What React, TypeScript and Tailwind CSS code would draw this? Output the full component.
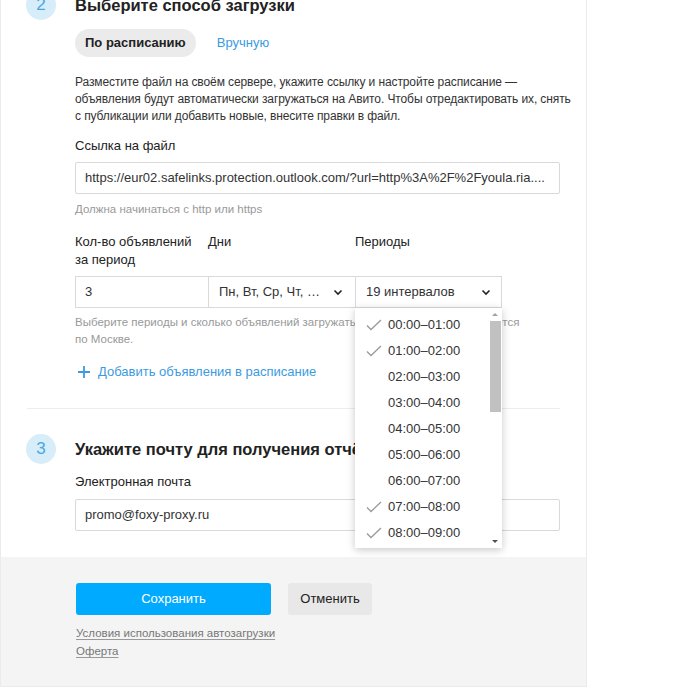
import React from "react";

const Check = () => (
  <svg width="16" height="12" viewBox="0 0 16 12" className="shrink-0">
    <path d="M1 6.5 L5 10.5 L15 1" fill="none" stroke="#9a9a9a" strokeWidth="1.3" />
  </svg>
);

const Chevron = () => (
  <svg width="10" height="7" viewBox="0 0 10 7">
    <path d="M1.5 1.5 L5 5 L8.5 1.5" fill="none" stroke="#222" strokeWidth="1.6" />
  </svg>
);

const periods: [string, boolean][] = [
  ["00:00–01:00", true],
  ["01:00–02:00", true],
  ["02:00–03:00", false],
  ["03:00–04:00", false],
  ["04:00–05:00", false],
  ["05:00–06:00", false],
  ["06:00–07:00", false],
  ["07:00–08:00", true],
  ["08:00–09:00", true],
];

export default function App() {
  return (
    <div
      className="w-[700px] h-[693px] bg-white overflow-hidden text-[#222]"
      style={{ fontFamily: '"Liberation Sans", Arial, sans-serif' }}
    >
      <div className="w-[587px] border-x border-b border-[#ebebeb] mt-[-10px]">
        {/* Section 2 */}
        <div className="pl-[25px] pr-[26px]">
          <div className="flex items-center gap-[19px] h-[30px]">
            <div className="w-[30px] h-[30px] rounded-full bg-[#d8edfa] text-[#4aa6e0] text-[17px] flex items-center justify-center">
              2
            </div>
            <div className="text-[16.5px] font-bold">Выберите способ загрузки</div>
          </div>
          <div className="pl-[49px]">
            <div className="flex items-center mt-[9px] h-[28px]">
              <div className="h-[28px] px-[10px] rounded-full bg-[#ebebeb] text-[13px] font-bold flex items-center">
                По расписанию
              </div>
              <div className="ml-[21px] text-[13px] text-[#3c9be0]">Вручную</div>
            </div>
            <p className="mt-[17px] text-[12px] leading-[17px] text-[#333] whitespace-nowrap tracking-[-0.1px]">
              Разместите файл на своём сервере, укажите ссылку и настройте расписание —<br />
              объявления будут автоматически загружаться на Авито. Чтобы отредактировать их, снять
              <br />с публикации или добавить новые, внесите правки в файл.
            </p>
            <div className="mt-[11px] text-[13px] leading-[20px]">Ссылка на файл</div>
            <div className="mt-[6px] h-[32px] border border-[#d9d9d9] rounded-[2px] px-[9px] flex items-center text-[13px] text-[#333] whitespace-nowrap overflow-hidden">
              https://eur02.safelinks.protection.outlook.com/?url=http%3A%2F%2Fyoula.ria....
            </div>
            <div className="mt-[7px] text-[11.5px] leading-[16px] text-[#999]">
              Должна начинаться с http или https
            </div>
            <div className="mt-[16px] flex text-[13px] leading-[18px]">
              <div className="w-[133px]">
                Кол-во объявлений
                <br />
                за период
              </div>
              <div className="w-[147px]">Дни</div>
              <div>Периоды</div>
            </div>
            <div className="mt-[7px] flex h-[32px] text-[13px] text-[#333]">
              <div className="w-[134px] border border-[#d9d9d9] px-[9px] flex items-center">3</div>
              <div className="w-[147px] border-y border-r border-[#d9d9d9] pl-[10px] pr-[12px] flex items-center justify-between">
                <span>Пн, Вт, Ср, Чт, …</span>
                <Chevron />
              </div>
              <div className="relative w-[146px] border-y border-r border-[#d9d9d9] pl-[10px] pr-[10px] flex items-center justify-between">
                <span>19 интервалов</span>
                <Chevron />
                <div className="absolute left-[-1px] top-[31px] w-[147px] h-[240px] bg-white shadow-[0_2px_8px_rgba(0,0,0,0.22)] z-10 flex">
                  <div className="flex-1 pt-[4px]">
                    {periods.map(([t, c]) => (
                      <div key={t} className="h-[26px] flex items-center pl-[11px] text-[13px] text-[#333]">
                        <div className="w-[16px]">{c ? <Check /> : null}</div>
                        <span className="ml-[6px]">{t}</span>
                      </div>
                    ))}
                  </div>
                  <div className="w-[14px] flex flex-col items-center">
                    <div className="h-[13px] flex items-center justify-center">
                      <div className="w-0 h-0 border-x-[3px] border-x-transparent border-b-[3px] border-b-[#a3a3a3]" />
                    </div>
                    <div className="w-[11px] h-[91px] bg-[#c1c1c1]" />
                    <div className="flex-1" />
                    <div className="h-[13px] flex items-center justify-center">
                      <div className="w-0 h-0 border-x-[3px] border-x-transparent border-t-[3px] border-t-[#505050]" />
                    </div>
                  </div>
                </div>
              </div>
            </div>
            <p className="mt-[6px] w-[485px] text-[11.5px] leading-[17px] text-[#999]">
              Выберите периоды и сколько объявлений загружать в каждый. Время указывается
              <br />
              по Москве.
            </p>
            <div className="mt-[14px] h-[20px] flex items-center text-[13px] text-[#3c9be0]">
              <svg width="14" height="14" viewBox="0 0 14 14" className="ml-[2px]">
                <path d="M7 1 V13 M1 7 H13" stroke="#3c9be0" strokeWidth="1.8" />
              </svg>
              <span className="ml-[7px]">Добавить объявления в расписание</span>
            </div>
          </div>
          <div className="mt-[26px] ml-[1px] h-px bg-[#ededed]" />
          {/* Section 3 */}
          <div className="mt-[25px] flex items-center gap-[19px] h-[30px]">
            <div className="w-[30px] h-[30px] rounded-full bg-[#d8edfa] text-[#4aa6e0] text-[17px] flex items-center justify-center">
              3
            </div>
            <div className="text-[16.5px] font-bold whitespace-nowrap">Укажите почту для получения отчётов</div>
          </div>
          <div className="pl-[49px] pb-[26px]">
            <div className="mt-[8px] text-[13px] leading-[20px]">Электронная почта</div>
            <div className="mt-[7px] h-[32px] border border-[#d9d9d9] rounded-[2px] px-[9px] flex items-center text-[13px] text-[#333]">
              promo@foxy-proxy.ru
            </div>
          </div>
        </div>
        {/* Footer */}
        <div className="bg-[#f4f4f4] pl-[75px] pt-[26px] pb-[26px]">
          <div className="flex gap-[17px]">
            <div className="w-[195px] h-[32px] rounded-[3px] bg-[#00aaff] text-white text-[13px] flex items-center justify-center">
              Сохранить
            </div>
            <div className="w-[84px] h-[32px] rounded-[3px] bg-[#e8e8e8] text-[13px] text-[#222] flex items-center justify-center">
              Отменить
            </div>
          </div>
          <div className="mt-[9px] text-[11.5px] leading-[18px] text-[#777]">
            <div>
              <span className="underline underline-offset-2 decoration-[#999]">Условия использования автозагрузки</span>
            </div>
            <div>
              <span className="underline underline-offset-2 decoration-[#999]">Оферта</span>
            </div>
          </div>
        </div>
      </div>
    </div>
  );
}
